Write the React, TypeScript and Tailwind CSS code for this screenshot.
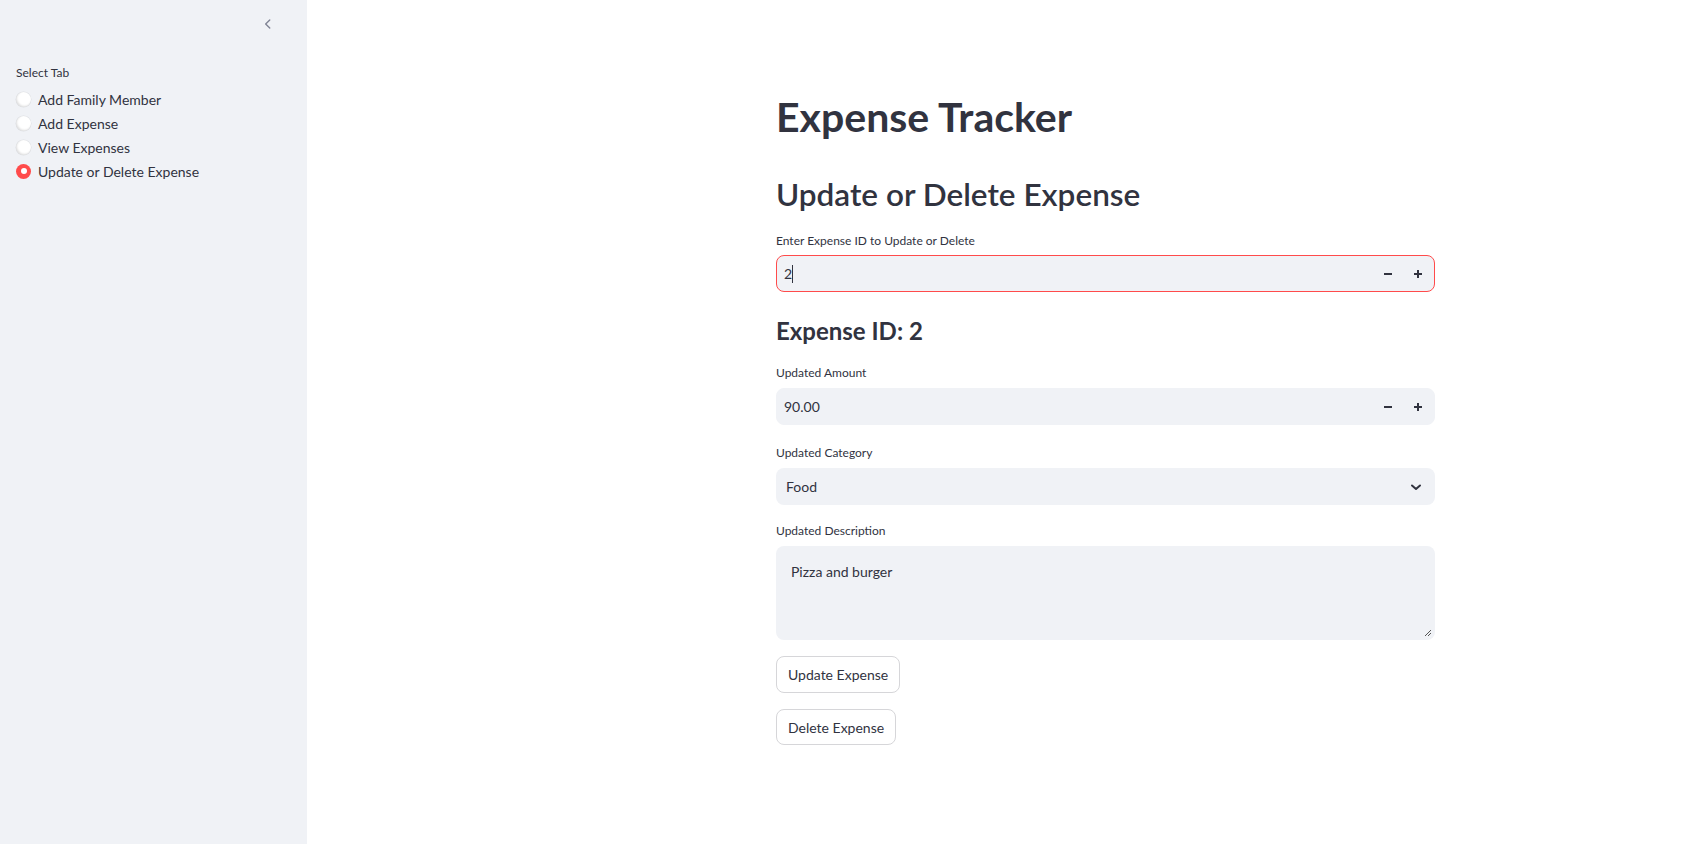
import { useState } from 'react'

let tabs = ['Add Family Member', 'Add Expense', 'View Expenses', 'Update or Delete Expense']

let Minus = () => (
  <svg width="10" height="10" viewBox="0 0 10 10">
    <path d="M1 5h8" stroke="#31333f" strokeWidth="2" />
  </svg>
)

let Plus = () => (
  <svg width="10" height="10" viewBox="0 0 10 10">
    <path d="M1 5h8M5 1v8" stroke="#31333f" strokeWidth="2" />
  </svg>
)

let Radio = (props: { label: string; checked: boolean; onClick: () => void }) => {
  let { label, checked, onClick } = props
  return (
    <div onClick={onClick} className="flex items-center h-[24px] cursor-pointer">
      {checked ? (
        <div className="w-[15px] h-[15px] rounded-full bg-[#ff4b4b] flex items-center justify-center">
          <div className="w-[6px] h-[6px] rounded-full bg-white" />
        </div>
      ) : (
        <div className="w-[15px] h-[15px] rounded-full bg-white shadow-[inset_1px_-1px_2px_rgba(0,0,0,0.12),0_0_0_0.5px_rgba(0,0,0,0.08)]" />
      )}
      <span className="ml-[7px] text-[14px] text-[#31333f]">{label}</span>
    </div>
  )
}

let NumberInput = (props: { value: string; focused?: boolean }) => {
  let { value, focused } = props
  return (
    <div
      className={`flex items-center h-[37px] rounded-[8px] bg-[#f0f2f6] border ${
        focused ? 'border-[#ff4b4b]' : 'border-[#f0f2f6]'
      }`}
    >
      <div className="flex-1 flex items-center pl-[7px] text-[14px] text-[#31333f]">
        <span>{value}</span>
        {focused && <span className="w-px h-[18px] bg-[#31333f]" />}
      </div>
      <div className="flex items-center justify-center w-[30px] h-full">
        <Minus />
      </div>
      <div className="flex items-center justify-center w-[30px] h-full mr-px">
        <Plus />
      </div>
    </div>
  )
}

let Label = (props: { text: string; className?: string }) => (
  <div className={`text-[12px] leading-[18px] text-[#31333f] ${props.className ?? ''}`}>
    {props.text}
  </div>
)

export default function App() {
  let [tab, setTab] = useState(3)
  return (
    <div
      className="flex w-full h-[844px] bg-white text-[#31333f] overflow-hidden"
      style={{ fontFamily: '"Source Sans Pro", Lato, "Noto Sans", sans-serif' }}
    >
      <aside className="w-[307px] shrink-0 bg-[#f0f2f6] flex flex-col">
        <div className="flex justify-end pt-[16px] pr-[32px] h-[64px]">
          <svg width="14" height="14" viewBox="0 0 24 24" fill="none" className="mt-px">
            <path d="M15 5l-7 7 7 7" stroke="#808495" strokeWidth="2.4" strokeLinecap="round" strokeLinejoin="round" />
          </svg>
        </div>
        <div className="pl-[16px]">
          <Label text="Select Tab" className="mb-[5px]" />
          {tabs.map((t, i) => (
            <Radio key={t} label={t} checked={tab == i} onClick={() => setTab(i)} />
          ))}
        </div>
      </aside>
      <main className="flex-1 pl-[469px]">
        <div className="w-[659px] flex flex-col pt-[93px]">
          <h1 className="text-[41px] leading-[48px] font-bold">Expense Tracker</h1>
          <h2 className="mt-[33px] text-[31.5px] leading-[40px] font-semibold">Update or Delete Expense</h2>
          <Label text="Enter Expense ID to Update or Delete" className="mt-[18px]" />
          <div className="mt-[5px]">
            <NumberInput value="2" focused />
          </div>
          <h3 className="mt-[23px] text-[24px] leading-[32px] font-bold">Expense ID: 2</h3>
          <Label text="Updated Amount" className="mt-[17px]" />
          <div className="mt-[6px]">
            <NumberInput value="90.00" />
          </div>
          <Label text="Updated Category" className="mt-[19px]" />
          <div className="mt-[6px] flex items-center h-[37px] rounded-[8px] bg-[#f0f2f6] pl-[10px] pr-[13px] text-[14px]">
            <span className="flex-1">Food</span>
            <svg width="12" height="12" viewBox="0 0 12 12" fill="none">
              <path d="M2 4.5l4 3.5 4-3.5" stroke="#31333f" strokeWidth="2" strokeLinecap="round" strokeLinejoin="round" />
            </svg>
          </div>
          <Label text="Updated Description" className="mt-[17px]" />
          <div className="mt-[6px] relative h-[94px] rounded-[8px] bg-[#f0f2f6] px-[15px] pt-[15px] text-[14px]">
            Pizza and burger
            <svg width="8" height="8" viewBox="0 0 8 8" className="absolute right-[3px] bottom-[3px]">
              <path d="M7 1L1 7M7 4L4 7" stroke="#555" strokeWidth="1" />
            </svg>
          </div>
          <div className="mt-[16px]">
            <button className="h-[37px] px-[11px] rounded-[8px] border border-[#d6d6d9] bg-white text-[14px] text-[#31333f]">
              Update Expense
            </button>
          </div>
          <div className="mt-[16px]">
            <button className="h-[36px] px-[11px] rounded-[8px] border border-[#d6d6d9] bg-white text-[14px] text-[#31333f]">
              Delete Expense
            </button>
          </div>
        </div>
      </main>
    </div>
  )
}
